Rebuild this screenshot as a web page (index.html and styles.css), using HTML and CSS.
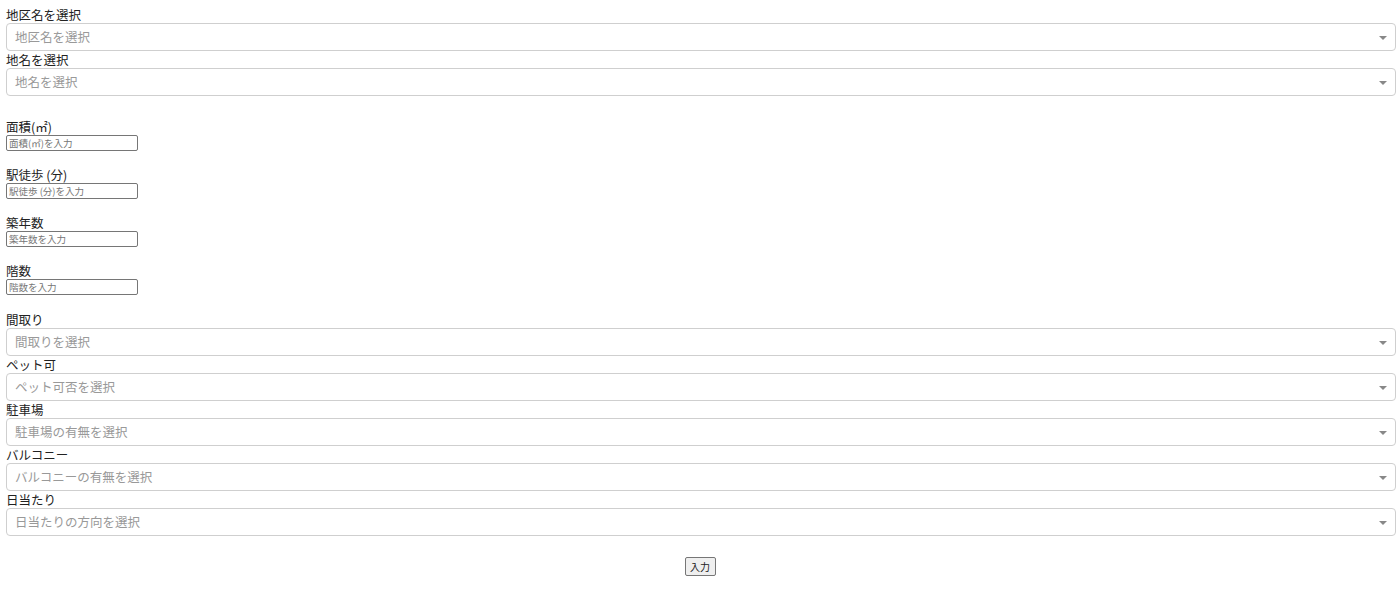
FILE: index.html
```html
<!DOCTYPE html>
<html>
<head>
  <link rel="stylesheet" href="styles.css">
</head>
<body>
  <form class="search-form">
    <div class="field">
      <label class="field-label">地区名を選択</label>
      <div class="select-box"><span class="placeholder">地区名を選択</span><span class="arrow"></span></div>
    </div>
    <div class="field">
      <label class="field-label">地名を選択</label>
      <div class="select-box"><span class="placeholder">地名を選択</span><span class="arrow"></span></div>
    </div>

    <div class="numbers">
      <div class="num-field">
        <label class="field-label">面積(㎡)</label>
        <input class="num-input" type="text" placeholder="面積(㎡)を入力">
      </div>
      <div class="num-field">
        <label class="field-label">駅徒歩 (分)</label>
        <input class="num-input" type="text" placeholder="駅徒歩 (分)を入力">
      </div>
      <div class="num-field">
        <label class="field-label">築年数</label>
        <input class="num-input" type="text" placeholder="築年数を入力">
      </div>
      <div class="num-field">
        <label class="field-label">階数</label>
        <input class="num-input" type="text" placeholder="階数を入力">
      </div>
    </div>

    <div class="field">
      <label class="field-label">間取り</label>
      <div class="select-box"><span class="placeholder">間取りを選択</span><span class="arrow"></span></div>
    </div>
    <div class="field">
      <label class="field-label">ペット可</label>
      <div class="select-box"><span class="placeholder">ペット可否を選択</span><span class="arrow"></span></div>
    </div>
    <div class="field">
      <label class="field-label">駐車場</label>
      <div class="select-box"><span class="placeholder">駐車場の有無を選択</span><span class="arrow"></span></div>
    </div>
    <div class="field">
      <label class="field-label">バルコニー</label>
      <div class="select-box"><span class="placeholder">バルコニーの有無を選択</span><span class="arrow"></span></div>
    </div>
    <div class="field">
      <label class="field-label">日当たり</label>
      <div class="select-box"><span class="placeholder">日当たりの方向を選択</span><span class="arrow"></span></div>
    </div>

    <div class="submit-row">
      <button class="submit-button" type="button">入力</button>
    </div>
  </form>
</body>
</html>
```

FILE: styles.css
```css
body {
  font-family: 'Noto Sans CJK JP', 'Noto Sans', sans-serif;
  color: #222;
  background-color: #ffffff;
  margin: 0;
}

.search-form {
  padding: 6px 4px 0 6px;
  display: flex;
  flex-direction: column;
}

.field-label {
  display: block;
  font-size: 12.5px;
  line-height: 17px;
  height: 17px;
  color: #222;
}

.select-box {
  position: relative;
  box-sizing: border-box;
  height: 28px;
  border: 1px solid #cfcfcf;
  border-radius: 4px;
  padding-left: 8px;
  line-height: 25px;
  font-size: 12.5px;
}

.placeholder {
  color: #999;
}

.arrow {
  position: absolute;
  right: 8px;
  top: 12px;
  width: 0;
  height: 0;
  border-left: 4px solid transparent;
  border-right: 4px solid transparent;
  border-top: 4px solid #888;
}

.numbers {
  margin-top: 22px;
  padding-bottom: 1px;
}

.num-field {
  margin-bottom: 15px;
}

.num-input {
  display: block;
  box-sizing: border-box;
  width: 132px;
  height: 16px;
  margin: 0;
  padding: 0 2px;
  border: 1px solid #767676;
  border-radius: 2px;
  font-family: 'Noto Sans CJK JP', 'Noto Sans', sans-serif;
  font-size: 9.5px;
}

.num-input::placeholder {
  color: #757575;
}

.submit-row {
  display: flex;
  justify-content: center;
  margin-top: 21px;
  padding-right: 2px;
}

.submit-button {
  box-sizing: border-box;
  width: 31px;
  height: 19px;
  padding: 0;
  background-color: #efefef;
  border: 1px solid #767676;
  border-radius: 2px;
  font-family: 'Noto Sans CJK JP', 'Noto Sans', sans-serif;
  font-size: 10px;
  color: #222;
}
```
